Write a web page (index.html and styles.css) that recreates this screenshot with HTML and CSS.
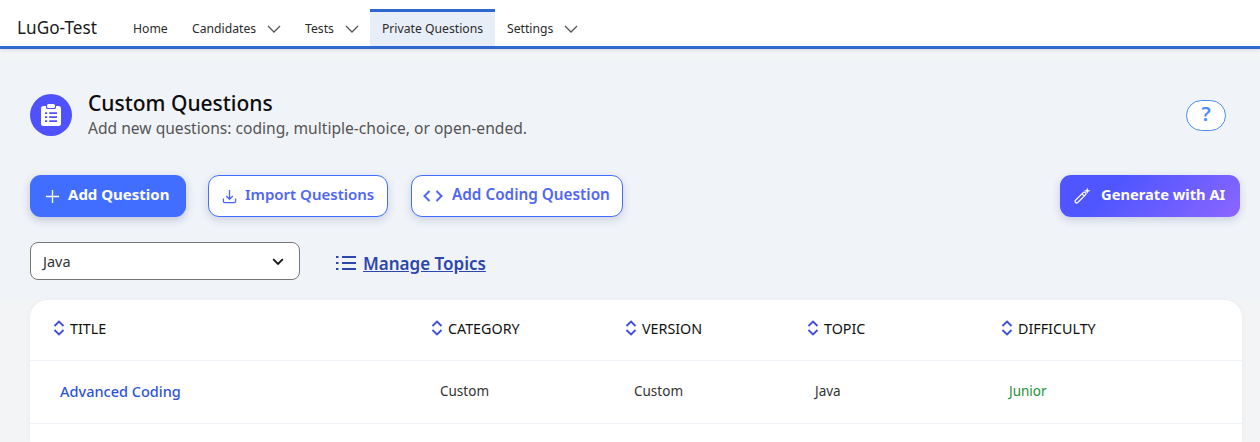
FILE: index.html
```html
<!DOCTYPE html>
<html lang="en">
<head>
<meta charset="utf-8">
<title>Custom Questions</title>
<link rel="stylesheet" href="styles.css">
</head>
<body>
<header class="topbar">
  <div class="brand">LuGo-Test</div>
  <nav class="nav">
    <a class="nav-item nav-home">Home</a>
    <a class="nav-item nav-candidates">Candidates<svg class="caret" viewBox="0 0 14 8"><path d="M1 1l6 6 6-6"/></svg></a>
    <a class="nav-item nav-tests">Tests<svg class="caret" viewBox="0 0 14 8"><path d="M1 1l6 6 6-6"/></svg></a>
    <a class="nav-item nav-active">Private Questions</a>
    <a class="nav-item nav-settings">Settings<svg class="caret" viewBox="0 0 14 8"><path d="M1 1l6 6 6-6"/></svg></a>
  </nav>
</header>
<main class="page">
  <section class="hero">
    <div class="title-row">
      <div class="title-icon">
        <svg viewBox="0 0 20 22" width="20" height="22"><path fill="#fff" fill-rule="evenodd" d="M5 3.500V2H2.500A2.500 2.500 0 0 0 0 4.500V19.500A2.500 2.500 0 0 0 2.500 22h15a2.500 2.500 0 0 0 2.500-2.500V4.500A2.500 2.500 0 0 0 17.500 2H15v1.500A1.500 1.500 0 0 1 13.500 5h-7A1.500 1.500 0 0 1 5 3.500zM4 8.200h2.200v1.700H4zm4.200 0H16v1.700H8.200zM4 12.200h2.200v1.700H4zm4.200 0H16v1.700H8.200zM4 16.200h2.200v1.700H4zm4.200 0H16v1.700H8.200z"/><rect fill="#fff" x="6" y="0" width="8" height="4" rx="1.500"/></svg>
      </div>
      <div class="title-text">
        <h1>Custom Questions</h1>
        <p>Add new questions: coding, multiple-choice, or open-ended.</p>
      </div>
      <button class="help">?</button>
    </div>
    <div class="actions">
      <button class="btn btn-primary"><svg class="ico" viewBox="0 0 16 16"><path d="M8 1v14M1 8h14"/></svg>Add Question</button>
      <button class="btn btn-outline"><svg class="ico" viewBox="0 0 16 16"><path d="M8 1v9.500M4.500 7.500L8 11l3.500-3.500M1.500 10v3a1.500 1.500 0 0 0 1.500 1.500h10a1.500 1.500 0 0 0 1.500-1.500v-3"/></svg>Import Questions</button>
      <button class="btn btn-outline btn-code"><svg class="ico ico-code" viewBox="0 0 20 14"><path d="M6.500 2L1.500 7l5 5M13.500 2l5 5-5 5"/></svg>Add Coding Question</button>
      <button class="btn btn-ai"><svg class="ico ico-wand" viewBox="0 0 18 18"><path d="M1.600 13.500L9.700 5.400a1.700 1.700 0 0 1 2.400 2.400L4 15.900a1.700 1.700 0 0 1-2.400-2.400zM8.500 6.600l2.400 2.400"/><path class="spark" d="M14 0l.9 2.600 2.600.9-2.600.9-.9 2.600-.9-2.600-2.600-.9 2.600-.9z"/></svg>Generate with AI</button>
    </div>
    <div class="filter-row">
      <div class="select">Java<svg class="select-caret" viewBox="0 0 12 8"><path d="M1.200 1.200L6 6l4.800-4.800"/></svg></div>
      <a class="manage"><svg class="list-ico" viewBox="0 0 20 16"><path d="M6 2h14M6 8h14M6 14h14M0 2h2.500M0 8h2.500M0 14h2.500"/></svg><span>Manage Topics</span></a>
    </div>
  </section>
  <section class="card">
    <div class="row row-head">
      <div class="cell"><svg class="sort" viewBox="0 0 12 16"><path d="M1.500 6L6 1.500 10.500 6M1.500 10L6 14.500 10.500 10"/></svg>TITLE</div>
      <div class="cell"><svg class="sort" viewBox="0 0 12 16"><path d="M1.500 6L6 1.500 10.500 6M1.500 10L6 14.500 10.500 10"/></svg>CATEGORY</div>
      <div class="cell"><svg class="sort" viewBox="0 0 12 16"><path d="M1.500 6L6 1.500 10.500 6M1.500 10L6 14.500 10.500 10"/></svg>VERSION</div>
      <div class="cell"><svg class="sort" viewBox="0 0 12 16"><path d="M1.500 6L6 1.500 10.500 6M1.500 10L6 14.500 10.500 10"/></svg>TOPIC</div>
      <div class="cell"><svg class="sort" viewBox="0 0 12 16"><path d="M1.500 6L6 1.500 10.500 6M1.500 10L6 14.500 10.500 10"/></svg>DIFFICULTY</div>
    </div>
    <div class="row row-body">
      <div class="cell link">Advanced Coding</div>
      <div class="cell">Custom</div>
      <div class="cell">Custom</div>
      <div class="cell">Java</div>
      <div class="cell junior">Junior</div>
    </div>
  </section>
</main>
</body>
</html>
```
FILE: styles.css
```css
* { box-sizing: border-box; }
html, body { margin: 0; height: 442px; overflow: hidden; }
body { background: #f3f4f6; font-family: "Noto Sans", sans-serif; color: #111; }
.topbar { display: flex; align-items: flex-end; height: 49px; background: #fff; border-bottom: 3px solid #2f69cf; box-shadow: 0 1px 4px rgba(0,0,0,.12); position: relative; }
.brand { width: 133px; padding: 0 0 6px 17px; font-size: 17.200px; line-height: 24px; color: #1a1a1a; font-family: "Noto Sans", sans-serif; }
.nav { display: flex; align-items: stretch; height: 37px; }
.nav-item { display: flex; align-items: center; font-size: 12.200px; color: #2b2b2b; padding-top: 1px; }
.nav-home { width: 59px; }
.nav-candidates { width: 113px; }
.nav-tests { width: 65px; }
.nav-active { width: 125px; justify-content: center; background: #e8eef8; border-top: 3px solid #2f69cf; padding: 0 0 2px; }
.nav-settings { padding-left: 12px; }
.caret { width: 14px; height: 8px; margin: 2px 0 0 11px; fill: none; stroke: #555; stroke-width: 1.300; }
.page { margin-top: 11px; }
.hero { background: #f0f3f8; height: 240px; padding: 34px 20px 0 30px; }
.title-row { display: flex; align-items: center; height: 42px; }
.title-icon { width: 42px; height: 42px; border-radius: 50%; background: #4f51fd; display: flex; align-items: center; justify-content: center; flex: none; }
.title-icon svg { display: block; }
.title-text { margin: -3px 0 0 16px; flex: 1; }
.title-text h1 { margin: 0; font-size: 21px; line-height: 26px; font-weight: 500; color: #0c0c0c; }
.title-text p { margin: 2px 0 0; font-size: 15.600px; line-height: 20px; color: #555; }
.help { width: 40px; height: 31px; margin: 0 14px 0 0; background: #fff; border: 1.500px solid #4d8bf5; border-radius: 16px; color: #4d8bf5; font: 600 20px/26px "Noto Sans", sans-serif; padding: 0 0 2px; }
.actions { display: flex; margin-top: 39px; height: 42px; }
.btn { display: flex; align-items: center; height: 42px; border-radius: 11px; font: 600 15px "Noto Sans", sans-serif; padding: 0 0 4px; white-space: nowrap; }
.btn .ico { margin-top: 4px; }
.btn-primary { width: 156px; background: #426eff; color: #fff; border: 0; padding-left: 15px; font-weight: 700; box-shadow: 0 3px 8px rgba(40,60,120,.25); }
.btn-outline { width: 180px; margin-left: 22px; background: #fff; color: #4f66f5; border: 1px solid #426eff; padding-left: 13px; box-shadow: 0 3px 8px rgba(40,60,120,.18); }
.btn-code { width: 212px; margin-left: 23px; padding-left: 11px; font-size: 15.300px; }
.btn-ai { width: 180px; margin-left: auto; background: linear-gradient(135deg, #4f56ff 30%, #8c66ff 100%); color: #fff; border: 0; padding-left: 14px; font-size: 14.700px; font-weight: 700; box-shadow: 0 3px 8px rgba(40,60,120,.2); }
.ico { width: 15px; height: 15px; margin-right: 8px; fill: none; stroke: currentColor; stroke-width: 1.400; flex: none; }
.ico-code { width: 20px; height: 14px; stroke-width: 2; margin-right: 9px; }
.ico-wand { width: 17px; height: 18px; margin-right: 10px; stroke-width: 1.300; }
.spark { fill: #fff; stroke: none; }
.filter-row { display: flex; align-items: center; margin-top: 25px; }
.select { position: relative; width: 270px; height: 38px; background: #fff; border: 1px solid #777; border-radius: 8px; display: flex; align-items: center; padding-left: 12px; font-size: 14.500px; color: #333; }
.select-caret { position: absolute; right: 15px; top: 15px; width: 12px; height: 8px; fill: none; stroke: #111; stroke-width: 1.800; }
.manage { display: flex; align-items: center; margin: 4px 0 0 36px; color: #2c46ad; font-size: 17px; font-weight: 600; }
.manage span { text-decoration: underline; }
.list-ico { width: 20px; height: 16px; margin-right: 7px; fill: none; stroke: currentColor; stroke-width: 2.200; }
.card { margin: 0 18px 0 30px; background: #fff; border-radius: 18px 18px 0 0; box-shadow: 0 0 6px rgba(0,0,0,.04); height: 142px; }
.row { display: grid; align-items: center; border-bottom: 1px solid #f0f2f8; font-size: 13.500px; }
.row-head { height: 61px; color: #111; font-size: 14.300px; padding: 0 0 4px 23px; grid-template-columns: 378px 194px 182px 194px 1fr; }
.row-head .cell { display: flex; align-items: center; }
.row-body { height: 63px; padding: 0 0 3px 30px; grid-template-columns: 380px 194px 181px 194px 1fr; color: #333; }
.sort { width: 12px; height: 16px; margin-right: 5px; fill: none; stroke: #3d4fd0; stroke-width: 1.800; }
.link { color: #2f55d4; font-size: 14.500px; font-weight: 500; }
.junior { color: #23923a; }
```
